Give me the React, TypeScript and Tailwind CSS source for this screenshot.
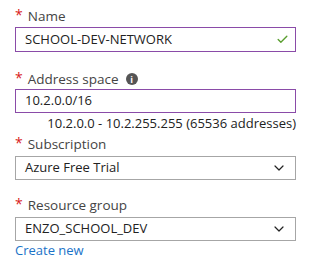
import { ChevronDown, Check } from "lucide-react";

function Label({ text, info }: { text: string; info?: boolean }) {
  return (
    <div className="flex items-center h-5 leading-5 text-[13.5px] text-[#444]">
      <span className="text-[#d81b1b] text-[14px] mr-[5px] -mt-[3px]">*</span>
      <span>{text}</span>
      {info && (
        <span className="ml-[7px] flex items-center justify-center w-[12px] h-[12px] rounded-full bg-[#555] text-white text-[9px] font-bold leading-none">
          i
        </span>
      )}
    </div>
  );
}

export default function App() {
  return (
    <div
      className="w-[315px] h-[269px] bg-white pl-[15px] pt-[6px] text-[13px] text-[#222]"
      style={{ fontFamily: '"Open Sans", "Noto Sans", sans-serif' }}
    >
      <div className="w-[281px]">
        <Label text="Name" />
        <div className="mt-[1px] h-[25px] border border-[#8a4ba8] flex items-center pl-[9px] pr-[6px] justify-between">
          <span>SCHOOL-DEV-NETWORK</span>
          <Check size={13} strokeWidth={2.5} className="text-[#5a9e2f]" />
        </div>

        <div className="mt-[17px]">
          <Label text="Address space" info />
        </div>
        <div className="h-[24px] border border-[#8a4ba8] flex items-center px-[9px]">
          <span>10.2.0.0/16</span>
        </div>
        <div className="h-[21px] leading-[21px] text-right">
          10.2.0.0 - 10.2.255.255 (65536 addresses)
        </div>

        <Label text="Subscription" />
        <div className="mt-[2px] h-[24px] border border-[#a6a6a6] flex items-center justify-between pl-[9px] pr-[8px]">
          <span>Azure Free Trial</span>
          <ChevronDown size={16} strokeWidth={1.8} className="text-[#222]" />
        </div>

        <div className="mt-[15px]">
          <Label text="Resource group" />
        </div>
        <div className="mt-[2px] h-[24px] border border-[#a6a6a6] flex items-center justify-between pl-[9px] pr-[8px]">
          <span>ENZO_SCHOOL_DEV</span>
          <ChevronDown size={16} strokeWidth={1.8} className="text-[#222]" />
        </div>
        <div className="h-[19px] leading-[19px] text-[#1a73c8]">Create new</div>
      </div>
    </div>
  );
}
